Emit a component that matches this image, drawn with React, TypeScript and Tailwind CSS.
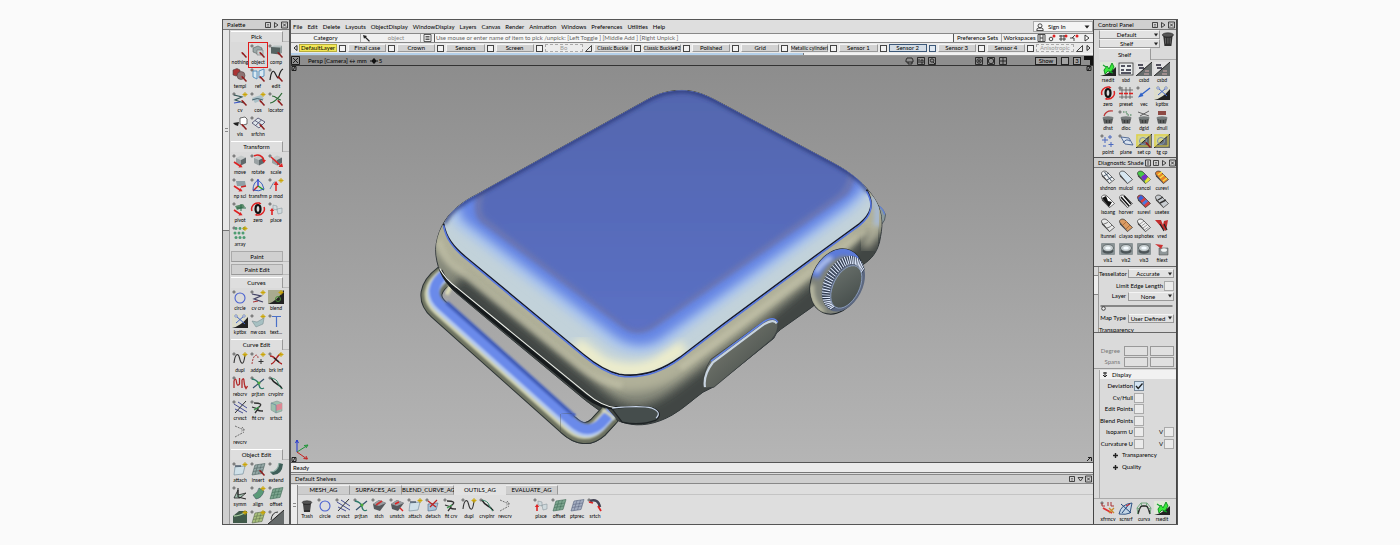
import type { ReactNode } from "react";

/* ---------- icon drawing helpers (16 x 14 grid) ---------- */
const dot = <circle cx="2" cy="2" r="1.1" fill="none" stroke="#333" strokeWidth=".7" />;
const spark = <path d="M13 0v5M10.500 2.500h5M11.500 1l3 3M14.500 1l-3 3" stroke="#c9a400" strokeWidth=".9" />;
const picker = (
  <g>
    <path d="M9 8l3 1.500l-1.500 1z" fill="#c22" />
    <path d="M10 8.500l4.500 5" stroke="#8c1f1f" strokeWidth="1.500" />
  </g>
);
const redArrow = (
  <g>
    <path d="M2 8l6 4" stroke="#d22" strokeWidth="1.600" />
    <path d="M6.500 13.500l4-.2l-2-3.300z" fill="#d22" />
  </g>
);
const cube = (
  <g>
    <path d="M4 4l5-2.500l5 2l-5 2.500z" fill="#c3c8c8" />
    <path d="M4 4l5 2v5.500l-5-2.500z" fill="#9aa2a4" />
    <path d="M9 6l5-2.500v5.500l-5 2.500z" fill="#5f686b" />
  </g>
);
const sheet = (a: string, b: string) => (
  <g>
    <path d="M5 3l10-1.500l-3 10l-10 1.500z" fill={a} stroke={b} strokeWidth=".6" />
    <path d="M8 2.500l-3 10M11.500 2l-3 10M4 6.500l10-1.500M3 9.500l10-1.500" stroke={b} strokeWidth=".5" />
  </g>
);
const half = (
  <g>
    <path d="M0 14L16 0v14z" fill="#666b6b" />
    <path d="M0 14L16 0" stroke="#222" strokeWidth="1" />
  </g>
);
const pot = (
  <g>
    <path d="M3 8h10l-1 5.500h-8z" fill="#3a3d3d" />
    <ellipse cx="8" cy="8" rx="5.500" ry="1.800" fill="#777d7d" />
    <path d="M5 10v3M8 10v3M11 10v3" stroke="#999" strokeWidth=".7" />
  </g>
);
const shade = (fill: string, extra?: ReactNode) => (
  <g>
    <path d="M1.500 4C1 1.500 4.500 0 7 2l7.500 7.500l-5 4z" fill={fill} stroke="#333" strokeWidth=".7" />
    <path d="M1.500 4l8 9.500v.5L2 6.500z" fill="#444" />
    {extra}
  </g>
);
const vis = (
  <g>
    <rect x="1" y="1" width="14" height="12" rx="1" fill="#8b9496" />
    <ellipse cx="8" cy="9" rx="5.500" ry="2.800" fill="#4d5659" />
    <ellipse cx="8" cy="6" rx="5.500" ry="3.500" fill="#c6ced0" stroke="#3c4547" strokeWidth=".6" />
    <ellipse cx="8" cy="6" rx="2.800" ry="1.600" fill="#f4fbff" />
  </g>
);
const zero = (
  <g fill="none">
    <path d="M2 9A6.500 6 0 0 1 9 1M14 5A6.500 6 0 0 1 7 13" stroke="#d22" strokeWidth="1.500" />
    <ellipse cx="8" cy="7" rx="2.500" ry="4" stroke="#111" strokeWidth="2.200" />
    <path d="M9 0l2.500 1.500L9 3zM7 11.500L4.500 13L7 14z" fill="#d22" />
  </g>
);
const kpt = (
  <g>
    <rect width="16" height="14" fill="#dcdccc" />
    <path d="M0 14Q9 12 16 3v11z" fill="#222" />
    <path d="M4 2l9 8M4 9l8-7" stroke="#4466c8" strokeWidth="1" />
    <circle cx="4" cy="2" r="1.200" fill="#fff" stroke="#3450a8" strokeWidth=".6" />
    <circle cx="12" cy="2" r="1.200" fill="#fff" stroke="#3450a8" strokeWidth=".6" />
  </g>
);
const rsedit = (
  <g>
    <rect width="16" height="14" fill="#dfe8d8" />
    <path d="M0 14Q9 12 16 5v9z" fill="#222" />
    <path d="M4 8l3-4l2 3l3-6l2 4l-3 5l-3-1l-3 3z" fill="#3bea3b" stroke="#0a8c1c" strokeWidth=".9" />
    <path d="M3 3l3 2M10 10l3 1" stroke="#12a52a" strokeWidth="1.200" />
  </g>
);
const place = (
  <g>
    <path d="M5 3l4 1v4l-4-1zM9 7l5-1v5l-4 1z" fill="#cfdadd" stroke="#7c8a90" strokeWidth=".5" />
    <path d="M4 13V8" stroke="#d22" strokeWidth="1.600" />
    <path d="M1.800 9L4 6l2.200 3z" fill="#d22" />
  </g>
);

const icons: Record<string, ReactNode> = {
  nothing: picker,
  object: <>{dot}<path d="M3 4l5-2l4 2v5l-4 1l-5-2z" fill="#9ba8a8" stroke="#4a5050" strokeWidth=".5" /><path d="M7 6h6v5h-6z" fill="#c8cfcf" stroke="#666" strokeWidth=".5" />{picker}</>,
  comp: <>{dot}<path d="M3 3l3-1.500h8l-2 2z" fill="#b9c4c4" /><path d="M3 3l9 .5v7l-9-1z" fill="#566362" /><path d="M12 3.500l2-2v7l-2 2z" fill="#8f9b9b" />{picker}</>,
  templ: <><path d="M1 2l4-1.500l3 1.500v5l-4 1l-3-1z" fill="#a33" stroke="#444" strokeWidth=".6" /><circle cx="9" cy="7.500" r="4" fill="#8d7373" stroke="#433" strokeWidth=".5" />{picker}</>,
  ref: <>{dot}<path d="M3 3h4v8l-4-2zM9 3l5-2v7l-5 2z" fill="#d9e9f2" stroke="#4d8bbb" strokeWidth=".9" />{picker}</>,
  edit: <>{dot}<path d="M2 12C3 4 5 1 7 5s3 7 4 3s2-6 4-7" fill="none" stroke="#222" strokeWidth="1.200" />{picker}</>,
  cv: <>{dot}{spark}<path d="M2 3l8 2l-7 3l9 3" fill="none" stroke="#355" strokeWidth="1.100" /><path d="M2 11l6-1" stroke="#3a55c8" strokeWidth="1.200" />{picker}</>,
  cos: <>{dot}{spark}<path d="M2 6l9-3l3 4l-9 4z" fill="#a9bfc6" /><path d="M2 8q5-3 11 0" fill="none" stroke="#46606c" />{picker}</>,
  locator: <>{dot}<path d="M2 11C5 11 11 6 14 1M4 4c4 0 6 4 9 4" fill="none" stroke="#2d6a35" strokeWidth="1.200" />{picker}</>,
  vis: <><path d="M8 2l5-1l2 2v5l-4 1l-3-1z" fill="#fff" stroke="#333" strokeWidth=".7" /><path d="M1 7l6-1l-1 4l-3-1z" fill="#222" />{picker}</>,
  srfchn: <>{dot}<path d="M2 7l6-5l7 4l-6 6z" fill="#dfe6ea" stroke="#446" strokeWidth=".8" /><path d="M5 4.500l7 4.500M5.500 9.500l6-5.500" stroke="#446" strokeWidth=".8" />{picker}</>,
  move: <>{dot}{cube}{redArrow}</>,
  rotate: <>{dot}{cube}<path d="M4 2q7-3 10 4" fill="none" stroke="#d22" strokeWidth="1.500" /><path d="M12 6h4l-2 3z" fill="#d22" /></>,
  scale: <>{dot}{cube}<path d="M3 3l10 9" stroke="#d22" strokeWidth="1.400" /><path d="M10.500 13h4.500l-1-4z" fill="#d22" /></>,
  "np scl": <>{dot}<path d="M4 3h9l1 5h-9z" fill="#8fa0a5" />{redArrow}<path d="M9 9l5-1" stroke="#c22" strokeWidth="1.500" /></>,
  transfrm: <g fill="none" strokeWidth="1.300">{dot}<path d="M8 8V1" stroke="#23d" /><path d="M8 8l-5 5" stroke="#c22" /><path d="M8 8l6 4" stroke="#292" /><path d="M8 2Q3 5 3 12Q9 14 14 11Q13 5 8 2" stroke="#2952b8" strokeWidth=".9" /></g>,
  "p mod": <>{dot}{spark}<path d="M8 13V5" stroke="#d22" strokeWidth="1.500" /><path d="M5.500 7L8 3l2.500 4z" fill="#d22" /><path d="M2 11q4-8 5-7" fill="none" stroke="#6688a8" /></>,
  pivot: <>{dot}<path d="M3 4l8-2l2 3l-8 3z" fill="#5b8a6a" /><path d="M9 2v7M5 6h9" stroke="#264" strokeWidth=".9" />{redArrow}</>,
  zero,
  place: <>{dot}{place}</>,
  array: <>{dot}<g fill="#4e9c72">{[3, 7, 11].map((x) => <g key={x}><circle cx={x + 1} cy="2.500" r="1.400" /><circle cx={x} cy="7" r="1.500" /><circle cx={x + 1} cy="11.500" r="1.500" /></g>)}</g>{spark}</>,
  circle: <>{dot}<circle cx="8" cy="8" r="5" fill="none" stroke="#4a62d0" strokeWidth="1.100" /></>,
  "cv crv": <>{dot}{spark}<path d="M2 4l9 2l-7 3l9 3" fill="none" stroke="#446" strokeWidth="1.200" /><path d="M3 12l5-1" stroke="#a33" /></>,
  blend: <><rect width="16" height="14" fill="#a9ab90" /><path d="M0 14Q9 11 16 0v14z" fill="#222" /><circle cx="10" cy="9" r="2.500" fill="none" stroke="#4a8c3a" />{spark}</>,
  kptbx: kpt,
  "nw cos": <>{dot}{spark}<path d="M2 7l5 1l7-4l-1 6l-7 3z" fill="#a7c0c2" stroke="#6f8589" strokeWidth=".5" /></>,
  "text...": <>{dot}<path d="M4 2.500h9M8.500 2.500V13" stroke="#4a70c8" strokeWidth="1.200" /></>,
  dupl: <>{dot}<path d="M2 11C3 2 6 0 7.500 6s4 9 5.500-3" fill="none" stroke="#333" strokeWidth="1.100" />{spark}</>,
  addpts: <>{dot}<path d="M2 12C3 2 8 1 8 6" fill="none" stroke="#a44" strokeWidth="1" strokeDasharray="2 1" /><path d="M11 7v5M8.500 9.500h5" stroke="#333" />{spark}</>,
  "brk inf": <>{dot}<path d="M2 4c6 0 7 7 12 8M3 12C8 11 8 3 13 2" fill="none" stroke="#a22" strokeWidth="1.300" /><path d="M6 6l5 4" stroke="#222" strokeWidth="1.600" />{spark}</>,
  rebcrv: <>{dot}<path d="M2 12V5q2-4 2.500 1t3 2V2M10 12V4q2-3 2 1t2 7M12.500 10l1.500 2.500l1.500-2.500" fill="none" stroke="#b02a2a" strokeWidth="1.300" /></>,
  prjtan: <>{dot}<path d="M2 3q6 1 7 6t5 3" fill="none" stroke="#2d7a6a" strokeWidth="1.300" /><path d="M3 12l11-9" stroke="#33506a" strokeWidth="1.200" /><circle cx="9" cy="7" r="1.500" fill="#4caa3c" /></>,
  crvplnr: <>{dot}<path d="M3 2q2 4 6 6t5 5" fill="none" stroke="#222" strokeWidth="1.600" /><path d="M3 2q6 1 7 5t4 6" fill="none" stroke="#3a8a6a" strokeWidth="1" /></>,
  crvsct: <>{dot}<path d="M2 4l13 8M3 9l8 4M6 2l9 6" stroke="#333c8a" strokeWidth=".9" /><path d="M3 13L14 1" stroke="#333" strokeWidth="1" /></>,
  "fit crv": <>{dot}<path d="M4 3q10 0 5 4t4 4M2 7l6 2l-3 4" fill="none" stroke="#333" strokeWidth="1.300" /><path d="M4 10l5-3" stroke="#3a9a4a" strokeWidth="1.200" /></>,
  srtsct: <><path d="M3 3l6-2l5 2v8l-6 2l-5-3z" fill="#9cc0ae" stroke="#7c8c8a" strokeWidth=".5" /><path d="M8 5l6-2v6l-6 2z" fill="#dd8894" /><path d="M3 3l5 2v8" fill="none" stroke="#59799a" strokeWidth=".6" /></>,
  revcrv: <path d="M3 2l9 4M3 13l9-5M10 3l2.500 3l-3 1" fill="none" stroke="#555" strokeWidth=".8" strokeDasharray="2 1" />,
  attach: <>{dot}<path d="M3 5l10-1l-2 8l-9 1z" fill="#cfe0e8" stroke="#6c8594" strokeWidth=".6" /><path d="M3 4h6" stroke="#345" strokeWidth="1.200" />{spark}</>,
  insert: <>{dot}{sheet("#95a8a6", "#4b5f5e")}{picker}</>,
  extend: <>{dot}<path d="M2 10q8 0 9-9l4 1q-1 11-10 11z" fill="#3e5f59" /><path d="M2 10q8 0 9-9" fill="none" stroke="#8fb0a6" strokeWidth="1.200" /></>,
  symm: <>{dot}<path d="M2 12l4-8v5l8-2l-6 5z" fill="#a0bfae" stroke="#222" strokeWidth=".8" /><path d="M6 2v9l8 2" fill="none" stroke="#222" /></>,
  align: <>{dot}<path d="M3 9q5-2 6-7l5 3q-2 7-8 8z" fill="#5a9a78" stroke="#345" strokeWidth=".5" />{spark}</>,
  offset: <>{dot}{sheet("#7da58f", "#3f6a55")}</>,
  s1: <><path d="M1 6l6-5h8v12h-14z" fill="#405a4a" /><path d="M2 6q6 0 12-4" stroke="#a9d0a0" fill="none" strokeWidth="1.500" />{spark}</>,
  s2: <>{dot}{sheet("#a9c07c", "#5a6a4a")}{spark}</>,
  s3: <>{dot}{half}<path d="M3 10q1-8 7-8" fill="none" stroke="#333" /></>,
  rsedit,
  sbd: <><rect x="1" y="1" width="14" height="12" fill="#e9ecec" stroke="#333" strokeWidth=".8" /><path d="M3 4h4M9 4h4M3 8h3M8 8h5M3 11h10" stroke="#223" strokeWidth="1.400" /></>,
  csbd: <><rect width="16" height="14" fill="#e2e2e2" />{half}<path d="M2 3h5M3 6h5" stroke="#223" strokeWidth="1.500" /><path d="M9 9h4M8 12h5" stroke="#d8b0b0" strokeWidth="1.200" /></>,
  preset: <>{dot}<path d="M4 1v12M8 1v12M12 1v12M1 4h14M1 11h14" stroke="#555" strokeWidth=".8" /><path d="M1 7.500h14" stroke="#d22" strokeWidth="1.400" strokeDasharray="4 1" /></>,
  vec: <>{dot}<path d="M14 2L5 9" stroke="#2f62c8" strokeWidth="1.300" /><path d="M2 11.500l3-5l2.500 3.500z" fill="#2f62c8" /></>,
  dhst: <>{pot}<path d="M4 6q2-6 9-5" fill="none" stroke="#b33" strokeWidth="1.200" /></>,
  dloc: <>{dot}{pot}<path d="M5 2h4v3h5" fill="none" stroke="#387a4a" strokeDasharray="1.500 1" /></>,
  dgid: <>{pot}<path d="M2 2l11 4M4 6l9-5" stroke="#555" strokeWidth=".9" /></>,
  dnull: <>{pot}<rect x="4" y="1" width="8" height="4" fill="#8e4a44" /></>,
  point: <>{dot}<path d="M5 3v6M2 6h6M10 1v4M8 3h4M11 8v5M8.500 10.500h5M3 12h3" stroke="#4a68c0" strokeWidth="1" /></>,
  plane: <>{dot}<path d="M3 3l8 1l4 7l-8-1z" fill="#d8e2f0" stroke="#45608e" strokeWidth=".9" /><path d="M5 9q3-5 7-2" fill="none" stroke="#45608e" /></>,
  "set cp": <><path d="M0 0h16L0 14z" fill="#d8d78a" />{half}<rect x="1" y="1" width="13" height="11" fill="none" stroke="#e0cf3c" strokeWidth="1" /><circle cx="7" cy="7" r="3.500" fill="none" stroke="#7b92b4" />{picker}</>,
  "tg cp": <><path d="M0 0h16L0 14z" fill="#d8d78a" />{half}<rect x="1" y="1" width="13" height="11" fill="none" stroke="#e0cf3c" strokeWidth="1" /><circle cx="7" cy="7" r="3.500" fill="none" stroke="#7b92b4" /></>,
  shdnon: shade("#eef1f3", <path d="M4 6l5-3M7 10l5-3M4.500 2l7 9" stroke="#345" strokeWidth=".9" />),
  mulcol: shade("#d6e6f0"),
  rancol: shade("#49c94a", <><path d="M5 7l4-3l3 3l-4 4z" fill="#7a2cc8" /><path d="M9 11l3-4l2.500 2.500l-5 4z" fill="#e8e23a" /></>),
  curevl: shade("#e8872a", <path d="M4 5l4-3M6 8l4-3M9 11l4-3" stroke="#f3e04a" strokeWidth="1.500" />),
  isoang: shade("#fff", <path d="M2 4l4-2l2 5l4 1l-3 5z" fill="#111" />),
  horver: shade("#fff", <path d="M3 3l8 9M6 2l7 8" stroke="#111" strokeWidth="1.600" />),
  surevl: shade("#d84040", <><path d="M2 4l3-3l3 3l-4 3z" fill="#3a62d8" /><path d="M6 9l4-3.500l2 2l-4 3.500z" fill="#4a7ae0" /></>),
  usetex: shade("#c8ccd0", <path d="M4 6l5-3M6 9l6-3" stroke="#333" strokeWidth="1.400" />),
  ltunnel: shade("#e8e8e8", <path d="M4 6q4-1 5-3M7 10q4-1 5-3" fill="none" stroke="#777" />),
  clayao: shade("#d99a62", <path d="M5 7l4-4M8 11l4-4" stroke="#b06f3c" />),
  ssphotex: shade("#f0f0f0", <path d="M4 6l4-3M5.500 8l4-3M7 10l4-3M8.500 12l4-3" stroke="#777" strokeWidth=".7" />),
  vred: <><path d="M1 2h6l2 5l1-4l4-1l-2 11l-3-2z" fill="#c22c2c" /><path d="M6 6l4 7M10 6l3 6" stroke="#222" strokeWidth="1.200" /></>,
  vis1: vis,
  vis2: vis,
  vis3: vis,
  filext: <><path d="M5 6h9v7h-9z" fill="#8e9698" stroke="#444" strokeWidth=".5" /><ellipse cx="10" cy="8" rx="3" ry="1.800" fill="#f0f4f4" /><path d="M1 2l8 1l-2 4l-2-2z" fill="#c33" /></>,
  Trash: <><path d="M4 5h8l-1 9H5z" fill="#2f2f2f" /><ellipse cx="8" cy="4.500" rx="4.800" ry="1.800" fill="#555" stroke="#1d1d1d" strokeWidth=".5" /><path d="M6 7v5M8 7v5M10 7v5" stroke="#7d7d7d" strokeWidth=".6" /></>,
  stch: <>{dot}<path d="M2 6l6-4l7 3l-6 8l-6-2z" fill="#54585c" /><path d="M2 6l6-4l7 3l-7 3z" fill="#9a9ea2" /><path d="M5 7l6-4" stroke="#c33" strokeWidth="1.600" /></>,
  unstch: <>{dot}<path d="M2 6l6-4l7 3l-6 8l-6-2z" fill="#54585c" /><path d="M2 6l6-4l7 3l-7 3z" fill="#9a9ea2" /><path d="M6 6l4-2M11 10l3 3" stroke="#d22" strokeWidth="1.400" /></>,
  detach: <>{dot}<path d="M3 6l10-1l-2 7l-8 1z" fill="#a9c4da" stroke="#4a6484" strokeWidth=".6" /><path d="M3 3l8 6M12 2L5 9" stroke="#b22" strokeWidth="1.200" /></>,
  ptprec: sheet("#a3adc0", "#56617c"),
  srtch: <>{dot}<path d="M3 3q8-3 10 6" fill="none" stroke="#445" strokeWidth="2.500" /><path d="M2 4l4 1M11 8l3 5" stroke="#d22" strokeWidth="1.800" /></>,
  xfrmcv: <>{dot}<path d="M2 2v3h3M8 1v4M11 1v4h3" stroke="#a33" fill="none" /><path d="M3 7l9 5" stroke="#d33" strokeWidth="1.800" /><path d="M9 7l5 5M14 7l-5 5" stroke="#c88a2a" strokeWidth="1.300" /></>,
  scnsrf: <><path d="M1 13Q3 3 14 2l-2 10q-4 2-11 1z" fill="#c4d6e6" stroke="#23477c" strokeWidth=".9" /><path d="M3 3l10 9M12 2L4 12" stroke="#23477c" /><path d="M8 5l4-2" stroke="#d22" /></>,
  curva: <><path d="M2 13Q4 5 6 5h4q2 0 4 8" fill="none" stroke="#222" strokeWidth="1.400" /><path d="M2 13L1 7l4-5h6l4 5l-1 6M6 5L5 2M10 5l1-3M4 8L1 7M12 8l3-1" fill="none" stroke="#5a9a6a" strokeWidth=".8" /></>,
};

function Tool({ name, selected = false }: { name: string; selected?: boolean }) {
  const hidden = /^s\d$/.test(name);
  return (
    <button
      type="button"
      className={
        selected
          ? "flex h-6 w-[18px] flex-col items-center overflow-visible outline outline-[#e01b1b]"
          : "flex h-6 w-[18px] flex-col items-center overflow-visible"
      }
    >
      <svg viewBox="0 0 16 14" className="mt-px h-[14px] w-4 shrink-0" aria-hidden="true">
        {icons[name]}
      </svg>
      {!hidden && <span className="mt-px text-[5px] leading-[7px] whitespace-nowrap">{name}</span>}
    </button>
  );
}

function Tools({ names }: { names: string[] }) {
  return (
    <div className="mt-px flex flex-wrap">
      {names.map((n, i) => (
        <Tool key={n + i} name={n} selected={n === "object"} />
      ))}
    </div>
  );
}

function WinButtons({ extra = false }: { extra?: boolean }) {
  return (
    <svg viewBox={extra ? "0 0 33 8" : "8 0 25 8"} className={extra ? "h-2 w-[33px] shrink-0" : "h-2 w-[25px] shrink-0"} fill="none" stroke="#222" strokeWidth=".8" aria-hidden="true">
      {extra && <path d="M1.500 1h5v6h-5zM4 2v4" />}
      <path d="M9.500 1.500h5v5h-5z" />
      <path d="M11 3.500h2M11 5h2" strokeWidth=".5" />
      <path d="M18.500 1.500l3.500 2.500l-3.500 2.500z" />
      <path d="M25.500 1h6v6h-6zM27 2.500l3 3M30 2.500l-3 3" />
    </svg>
  );
}

function PanelHead({ title, extra }: { title: string; extra?: boolean }) {
  return (
    <header className="flex h-[10px] shrink-0 items-center justify-between border-b border-[#777] bg-[#d0d0d0] pl-1">
      <h2 className="whitespace-nowrap">{title}</h2>
      <WinButtons extra={extra} />
    </header>
  );
}

const sections: { title: string; tools?: string[] }[] = [
  { title: "Pick", tools: ["nothing", "object", "comp", "templ", "ref", "edit", "cv", "cos", "locator", "vis", "srfchn"] },
  { title: "Transform", tools: ["move", "rotate", "scale", "np scl", "transfrm", "p mod", "pivot", "zero", "place", "array"] },
  { title: "Paint" },
  { title: "Paint Edit" },
  { title: "Curves", tools: ["circle", "cv crv", "blend", "kptbx", "nw cos", "text..."] },
  { title: "Curve Edit", tools: ["dupl", "addpts", "brk inf", "rebcrv", "prjtan", "crvplnr", "crvsct", "fit crv", "srtsct", "revcrv"] },
  { title: "Object Edit", tools: ["attach", "insert", "extend", "symm", "align", "offset", "s1", "s2", "s3"] },
];

function Palette() {
  return (
    <aside className="flex w-[68px] shrink-0 flex-col overflow-hidden border-r-2 border-[#555] bg-[#dadada]">
      <PanelHead title="Palette" />
      <div className="flex min-h-0 flex-1">
        <div className="flex w-[7px] shrink-0 flex-col border-r border-[#999] bg-[#cfcfcf]">
          <div className="flex h-[201px] items-center justify-center border-b border-[#777] bg-[#e6e6e6]">
            <span className="h-1 w-[3px] border-y border-[#888]" />
          </div>
        </div>
        <div className="flex min-w-0 flex-1 flex-col gap-0.5 overflow-hidden pt-px pl-px">
          {sections.map((s) => (
            <section key={s.title} className="shrink-0">
              <div className="flex h-[11px] items-stretch">
                <h3
                  className={
                    s.tools
                      ? "flex w-[52px] items-center justify-center border-t border-r border-t-white border-r-[#999] bg-[#dedede]"
                      : "flex w-[52px] items-center justify-center border border-[#aaa] border-b-[#999] bg-[#d0d0d0]"
                  }
                >
                  {s.title}
                </h3>
                <span className="flex-1 border-b border-[#bbb]" />
              </div>
              {s.tools && <Tools names={s.tools} />}
            </section>
          ))}
        </div>
      </div>
    </aside>
  );
}

const menus = ["File", "Edit", "Delete", "Layouts", "ObjectDisplay", "WindowDisplay", "Layers", "Canvas", "Render", "Animation", "Windows", "Preferences", "Utilities", "Help"];

const layers = [
  "DefaultLayer", "Final case", "Crown", "Sensors", "Screen", "Bo", "Classic Buckle", "Classic Buckle#2",
  "Polished", "Grid", "Metallic cylinderi", "Sensor 1", "Sensor 2", "Sensor 3", "Sensor 4", "Anisotropic",
];

function layerClass(name: string) {
  const size = name.length > 13 ? "text-[5px] " : "";
  const base = size + "flex h-2 min-w-0 flex-1 items-center justify-center border whitespace-nowrap ";
  if (name === "DefaultLayer") return base + "border-[#b8ae3c] bg-[#f3e858]";
  if (name === "Sensor 2") return base + "border-[#3c5878] bg-[#d4dde6]";
  if (name === "Bo" || name === "Anisotropic") return base + "border-dashed border-[#aaa] bg-[#ececec] text-[#999]";
  return base + "border-[#f4f4f4] border-r-[#999] border-b-[#999] bg-[#d2d2d2]";
}

function TopBars() {
  return (
    <div className="shrink-0">
      <nav className="flex h-[13px] items-center gap-[5px] bg-[#dedede] pl-0.5">
        {menus.map((m) => (
          <button key={m} type="button">{m}</button>
        ))}
        <button type="button" className="ml-auto flex h-[11px] w-[60px] items-center gap-1 border border-[#aaa] bg-[#f4f4f4] px-0.5">
          <svg viewBox="0 0 8 8" className="size-2" fill="none" stroke="#222" strokeWidth=".8" aria-hidden="true">
            <circle cx="4" cy="2.800" r="2" />
            <path d="M.7 7.500q0-2.500 2-2.500h2.600q2 0 2 2.500z" />
          </svg>
          <span className="flex-1 text-left">Sign In</span>
          <svg viewBox="0 0 6 4" className="h-1 w-[6px]" aria-hidden="true"><path d="M.5.5h5L3 3.500z" fill="#222" /></svg>
        </button>
      </nav>
      <div className="flex h-[10px] items-stretch border-y border-[#888] bg-[#f0f0f0] leading-[8px]">
        <button type="button" className="w-[70px] border-r border-[#aaa]">Category</button>
        <svg viewBox="0 0 11 8" className="h-2 w-[11px]" aria-hidden="true"><path d="M2 1l4 1l-1 1l4 4l-1 .8l-4-4l-1 1z" fill="#222" /></svg>
        <span className="w-[49px] border-r border-[#aaa] text-center text-[#888]">object</span>
        <svg viewBox="0 0 13 8" className="h-2 w-[13px]" fill="none" stroke="#333" strokeWidth=".8" aria-hidden="true"><path d="M3 .5h7v7H3zM4.500 2.500h4M4.500 4h4M4.500 5.500h4" /></svg>
        <input
          aria-label="Prompt line"
          placeholder="Use mouse or enter name of item to pick /unpick: [Left Toggle ] [Middle Add ] [Right Unpick ]"
          className="min-w-0 flex-1 border-x border-[#555] bg-[#f7f7f7] pl-px leading-[8px] placeholder:text-[#666]"
        />
        <button type="button" className="w-12 border-r border-[#aaa]">Preference Sets</button>
        <button type="button" className="w-[35px]">Workspaces</button>
        <svg viewBox="0 0 44 8" className="h-2 w-11" fill="none" stroke="#333" strokeWidth=".9" aria-hidden="true">
          <path d="M1 .5h7v7H1zM3 1v6M6 1v6M3 4h3" />
          <circle cx="14" cy="5" r="1.800" /><circle cx="17" cy="2" r="1.500" fill="#d22" stroke="none" />
          <path d="M22 2h7M22 5h7M24 1v6M27 1v6" /><circle cx="29" cy="2" r="1.500" fill="#d22" stroke="none" />
          <path d="M33 4h4v3M35 4l3-3" /><circle cx="40" cy="2" r="1.500" fill="#d22" stroke="none" />
        </svg>
        <svg viewBox="0 0 12 8" className="h-2 w-3" fill="#fff" stroke="#222" strokeWidth=".9" aria-hidden="true"><path d="M4 1l4 3l-4 3z" /></svg>
      </div>
      <div className="flex h-[10px] items-center bg-[#e9e9e9]">
        <button type="button" aria-label="Previous layers" className="w-2">
          <svg viewBox="0 0 8 8" className="size-2" fill="#fff" stroke="#222"><path d="M6 1.500L3 4l3 2.500z" /></svg>
        </button>
        {layers.map((l) => (
          <div key={l} className="flex min-w-0 flex-1 items-center gap-0.5 pr-0.5">
            <button type="button" className={layerClass(l)}>{l}</button>
            {l === "Bo" || l === "Anisotropic" ? (
              <svg viewBox="0 0 7 7" className="size-[7px] shrink-0" fill="none" stroke="#333" strokeWidth=".9" aria-hidden="true"><path d="M.5 6.500l6-6v6z" /></svg>
            ) : (
              <input
                type="checkbox"
                aria-label={l + " visible"}
                className={l === "Sensor 2" ? "size-[7px] shrink-0 appearance-none border border-[#3c5878] bg-[#dfe8f2]" : "size-[7px] shrink-0 appearance-none border border-[#444] bg-[#f2f2f2]"}
              />
            )}
          </div>
        ))}
        <button type="button" aria-label="Next layers" className="w-2">
          <svg viewBox="0 0 8 8" className="size-2" fill="#fff" stroke="#222"><path d="M2 1.500L5 4l-3 2.500z" /></svg>
        </button>
      </div>
      <div className="h-[3px] border-b border-[#999] bg-[#f2f2f2]">
        <div className="h-0.5 w-[64%] border-r border-[#777] bg-[#b4d0ea]" />
      </div>
    </div>
  );
}

function CameraBar() {
  return (
    <div className="flex h-[10px] shrink-0 items-center border-b border-[#333] bg-[#8e8e8e]">
      <svg viewBox="0 0 9 9" className="size-[9px]" fill="none" stroke="#111" strokeWidth=".9" aria-hidden="true"><path d="M.5.5h8v8h-8zM2 2l5 5M7 2L2 7" /></svg>
      <span className="ml-2">Persp [Camera] ↔ mm</span>
      <svg viewBox="0 0 10 8" className="ml-0.5 h-2 w-[10px]" fill="#111" stroke="#111" aria-hidden="true"><path d="M1 4h8M5 1v6" /><circle cx="5" cy="4" r="1.700" /></svg>
      <span>5</span>
      <svg viewBox="0 0 32 8" className="mr-[38px] ml-auto h-2 w-8" fill="none" stroke="#111" strokeWidth=".8" aria-hidden="true">
        <path d="M2 1h5l1 2v2H1V3zM3 5v2h4V5" />
        <path d="M12.500.5h7v7h-7zM14 2v4M16 3h2v3h-2z" />
        <path d="M23.500.5h7v7h-7zM28 5l2 2" /><circle cx="27" cy="3.500" r="1.700" />
      </svg>
      <svg viewBox="0 0 32 8" className="mr-7 h-2 w-8" fill="none" stroke="#111" strokeWidth=".8" aria-hidden="true">
        <path d="M.5.5h7v7h-7zM3 4h2M4 3v2" /><circle cx="4" cy="4" r="2.200" />
        <path d="M12.500.5h7v7h-7z" /><circle cx="16" cy="4" r="2.700" />
        <path d="M24.500.5h7v7h-7zM25 4h6M28 1v6" />
      </svg>
      <button type="button" className="flex h-2 w-[22px] items-center justify-center border border-[#222] bg-[#a2a2a2]">Show</button>
      <span className="ml-1 size-2 border border-[#222] bg-[#a2a2a2]" />
      <button type="button" className="ml-1 flex size-2 items-center justify-center border border-[#222] bg-[#a2a2a2]">3</button>
      <svg viewBox="0 0 10 9" className="ml-0.5 h-[9px] w-[10px]" aria-hidden="true"><path d="M1 0h9v9H7V4H1z" fill="#111" /></svg>
    </div>
  );
}

const BODY =
  "M682 89.500C694 89.500 703 93 715 99L833 162C852 172 866 184 875 198C882 209 884 222 881 236C879 251 872 259 862 265L812 307L781 329Q776 332 774 338L713 387L703 392C692 400 684 408 672 415C656 424 640 427 625 423C610 419 597 409 585 400L510 338L455 292C441 280 435 264 435 249C436 232 444 217 456 207C462 202 468 198 476 194L645 100C657 93 668 89.500 682 89.500Z";
const FACE =
  "M682 89.500C694 89.500 703 93 715 99L833 162C852 172 864 182 869 191C875 203 872 213 860 223L823 250L723 324L680 357C658 373 638 377 619 374C605 371 594 363 583 354L467 258C452 246 445 236 443 223C447 215 451 211 456 207C462 202 468 198 476 194L645 100C657 93 668 89.500 682 89.500Z";
const SEAM = "M443 223C445 236 452 246 467 258L583 354C594 363 605 371 619 374C638 377 658 373 680 357L723 324L823 250L860 223C872 213 875 203 867 189";
const LOOP = "M444 275C428 287 427 299 438 309L568 425Q584 440 598 427L610 414";

const bandLoop = (
  <g fill="none" strokeLinecap="butt" strokeLinejoin="round">
    <path d={LOOP} stroke="#2e3536" strokeWidth="22" />
    <path d={LOOP} stroke="#6b705f" strokeWidth="20" />
    <g filter="url(#b1)">
      <path d={LOOP} stroke="#cfd1b0" strokeWidth="14" transform="translate(0 -1)" />
      <path d={LOOP} stroke="#b4caf0" strokeWidth="12" transform="translate(2 -2)" />
      <path d={LOOP} stroke="#6a8aea" strokeWidth="10" transform="translate(3 -4)" />
      <path d="M446 302L574 416" stroke="#4560bc" strokeWidth="4" />
    </g>
    <path d="M446 276Q454 281 446 294" stroke="#dcdcb8" strokeWidth="4" filter="url(#b1)" />
    <path d="M602 410q7 3 12 9" stroke="#d6d7bc" strokeWidth="3" filter="url(#b1)" />
  </g>
);

function Viewport() {
  const teeth = Array.from({ length: 34 }, (_, i) => {
    const a = (90 + i * 6.600) * (Math.PI / 180);
    const c = Math.cos(a);
    const s = Math.sin(a);
    return <path key={i} d={`M${13 * c + 2} ${23 * s}L${19 * c - 1} ${29 * s - 1}`} />;
  });
  return (
    <main className="min-h-0 flex-1 bg-linear-to-b from-[#8d8d8d] to-[#b5b5b5]">
      <svg viewBox="291 65 802 397" className="h-full w-full" role="img" aria-label="Shaded watch case model">
        <defs>
          <clipPath id="body"><path d={BODY} /></clipPath>
          <clipPath id="face"><path d={FACE} /></clipPath>
          <clipPath id="loopEnd"><path d="M560 414L592 412Q600 404 606 407L618 421L600 450H560Z" /></clipPath>
          <clipPath id="crown"><ellipse cx="837" cy="281" rx="25" ry="34" transform="rotate(24 837 281)" /></clipPath>
          <filter id="b1" x="-20%" y="-20%" width="140%" height="140%"><feGaussianBlur stdDeviation="1.2" /></filter>
          <filter id="b2" x="-20%" y="-20%" width="140%" height="140%"><feGaussianBlur stdDeviation="2" /></filter>
          <filter id="b5" x="-20%" y="-20%" width="140%" height="140%"><feGaussianBlur stdDeviation="5" /></filter>
          <linearGradient id="core" x1="0" y1="0" x2="0" y2="1"><stop offset="0" stopColor="#5265ac" /><stop offset="1" stopColor="#5b70c4" /></linearGradient>
          <linearGradient id="disc" x1="0" y1="0" x2="1" y2="1"><stop offset="0" stopColor="#6a716c" /><stop offset="1" stopColor="#434b49" /></linearGradient>
          <linearGradient id="btn" x1="0" y1="0" x2="1" y2="1"><stop offset="0" stopColor="#85877b" /><stop offset="1" stopColor="#3a4241" /></linearGradient>
        </defs>

        <path d="M878 204q6 4 8 10q0 6-4 10z" fill="#8b9a9c" stroke="#39424c" strokeWidth=".7" />
        <path d="M880 206q4 3 5 8" fill="none" stroke="#6684d0" strokeWidth="1.500" />

        {bandLoop}

        <path d={BODY} fill="#85887a" stroke="#2e3438" strokeWidth="1" />
        <g clipPath="url(#body)" fill="none">
          <path d={SEAM} stroke="#b0b099" strokeWidth="34" filter="url(#b5)" />
          <path d="M450 290L585 400C600 412 610 423 635 425C660 425 680 410 703 392L774 338L862 265Q878 252 882 236" stroke="#343b3a" strokeWidth="38" filter="url(#b5)" opacity=".85" />
          <path d="M438 240Q444 262 460 270L580 366Q600 382 622 385" stroke="#c6c5ac" strokeWidth="7" filter="url(#b2)" opacity=".55" />
          <path d="M680 368L715 343L800 280L866 230" stroke="#c6c5ac" strokeWidth="7" filter="url(#b2)" opacity=".6" />
          <path d="M873 195Q881 208 877 226" stroke="#a7bad2" strokeWidth="7" filter="url(#b2)" />
          <path d="M864 246Q874 238 876 226" stroke="#bfbea6" strokeWidth="9" filter="url(#b5)" />
          <path d="M440 270Q445 281 455 289L585 396Q602 409 620 408" stroke="#161a1c" strokeWidth="3.500" />
          <path d="M439 268Q445 279 456 287L586 393Q602 407 618 408" stroke="#eef0ea" strokeWidth="1.100" />
        </g>

        <path d="M612 409Q640 404 653 408Q664 413 656 420Q640 426 622 422Z" fill="#454d4c" stroke="#1f2426" strokeWidth="1.200" />
        <path d="M612 408Q640 405 652 408Q662 412 656 418" fill="none" stroke="#cbd8ec" strokeWidth="1.100" />
        <g clipPath="url(#loopEnd)">{bandLoop}</g>

        <g clipPath="url(#face)">
          <path d={FACE} fill="#c2d2da" />
          <path d="M575 343L602 364Q630 376 656 365L684 346" fill="none" stroke="#efeecb" strokeWidth="15" filter="url(#b5)" />
          <path d="M682 60L850 145Q878 172 866 196L854 209L668 343Q636 363 607 342L459 228Q440 214 450 180L640 70Z" fill="#a9c4ee" filter="url(#b5)" />
          <path d="M682 60L850 142Q874 170 860 192L846 205L658 340Q636 351 615 336L466 222Q452 210 462 176L640 70Z" fill="#6686e4" filter="url(#b5)" />
          <path d="M682 60L850 140Q864 174 848 194L654 328Q636 339 620 326L480 222Q468 210 480 180L645 70Z" fill="#6a70a4" filter="url(#b2)" opacity=".75" />
          <path d="M682 60L845 142Q856 174 840 192L652 324Q636 335 621 322L486 218Q476 210 488 180L645 70Z" fill="url(#core)" filter="url(#b2)" />
          <path d="M443 223C447 215 451 211 456 207C462 202 468 198 476 194L645 100C657 93 668 89.500 682 89.500C694 89.500 703 93 715 99L833 162C852 172 864 182 869 191" fill="none" stroke="#2a3878" strokeWidth="4" filter="url(#b2)" />
        </g>
        <path d={SEAM} fill="none" stroke="#15192a" strokeWidth="1.600" />
        <path d={SEAM} fill="none" stroke="#5878e0" strokeWidth="1.600" transform="translate(0 1.700)" />

        <path d="M705 388Q701 374 711 359L764 321Q775 315 778 323Q779 331 772 339L714 387Z" fill="url(#btn)" stroke="#383f40" strokeWidth=".8" />
        <path d="M705 387Q703 375 713 362L764 324Q774 318 777 323" fill="none" stroke="#c8d4e0" strokeWidth="2.200" />
        <path d="M711 361L763 322Q774 315 778 322" fill="none" stroke="#5f80e4" strokeWidth="1.500" />

        <g>
          <ellipse cx="837" cy="281" rx="25" ry="34" transform="rotate(24 837 281)" fill="#7f837a" stroke="#20262a" strokeWidth="1" />
          <g clipPath="url(#crown)">
            <path d="M814 276Q826 250 846 250Q860 252 864 266" fill="none" stroke="#5c7ada" strokeWidth="11" filter="url(#b2)" />
            <path d="M816 272Q824 260 832 257" fill="none" stroke="#c4d2ee" strokeWidth="4" filter="url(#b2)" />
            <path d="M812 284Q810 302 824 312" fill="none" stroke="#c0c0a6" strokeWidth="5" filter="url(#b2)" />
          </g>
          <g transform="translate(844 284) rotate(27)">
            <ellipse rx="19" ry="29" fill="#5c6880" />
            <g stroke="#1f2a3c" strokeWidth="2.400">{teeth}</g>
            <g stroke="#dce6fa" strokeWidth="1.200">{teeth}</g>
            <ellipse cx="3.500" cy="1" rx="13" ry="23" fill="url(#disc)" stroke="#8fa2c4" strokeWidth=".8" />
          </g>
        </g>

        <g strokeWidth="1" fill="none">
          <path d="M296 452V440M294.500 443l1.500-3l1.500 3" stroke="#2233d0" />
          <path d="M296 452l11-7M303 445.500l4-.5l-2 3" stroke="#22963a" />
          <path d="M296 452l10 7M302.500 458.500l4 .5l-1.500-3" stroke="#c41f1f" />
        </g>
        <g fill="none" stroke="#111" strokeWidth=".9">
          <path d="M291 65.500h4v4h-4zM1088 65.500h4v4h-4zM291 457.500h4v4h-4z" />
          <path d="M1088 461l4-4M1089 457.500h3.500v3.500M292 69l2-3M1089 69l2-3M292 461l2-3" />
        </g>
      </svg>
    </main>
  );
}

const shelfTabs = ["MESH_AG", "SURFACES_AG", "BLEND_CURVE_AG", "OUTILS_AG", "EVALUATE_AG"];
const shelfTools = ["Trash", "circle", "crvsct", "prjtan", "stch", "unstch", "attach", "detach", "fit crv", "dupl", "crvplnr", "revcrv"];

function Shelves() {
  return (
    <div className="shrink-0 border-t border-[#555] bg-[#dedede]">
      <p className="h-[10px] border-b border-[#777] bg-[#ebebeb] pl-0.5 leading-[10px]">Ready</p>
      <div className="mt-px flex h-[10px] items-center justify-between border-y border-[#888] bg-[#cfcfcf] pl-1">
        <h2>Default Shelves</h2>
        <svg viewBox="8 0 25 8" className="h-2 w-[25px]" fill="none" stroke="#222" strokeWidth=".8" aria-hidden="true">
          <path d="M9.500 1.500h5v5h-5z" />
          <path d="M11 3.500h2M11 5h2" strokeWidth=".5" />
          <path d="M18 2.500h5l-2.500 3.500z" />
          <path d="M25.500 1h6v6h-6zM27 2.500l3 3M30 2.500l-3 3" />
        </svg>
      </div>
      <div className="mt-px flex h-[39px]">
        <div className="flex w-[7px] items-center justify-center border-r border-[#888] bg-[#ececec]">
          <span className="h-1 w-[3px] border-y border-[#888]" />
        </div>
        <div className="min-w-0 flex-1">
          <div className="flex h-[10px]">
            {shelfTabs.map((t) => (
              <button
                key={t}
                type="button"
                className={
                  t === "OUTILS_AG"
                    ? "w-[52px] bg-[#e2e2e2] leading-[8px]"
                    : "w-[52px] border-t border-r border-b border-t-[#eee] border-r-[#999] border-b-[#bbb] bg-[#cdcdcd] leading-[8px]"
                }
              >
                {t}
              </button>
            ))}
            <span className="flex-1 border-b border-[#c4c4c4]" />
          </div>
          <div className="flex pt-0.5">
            {shelfTools.map((t) => <Tool key={t} name={t} />)}
            <span className="w-[18px]" />
            {["place", "offset", "ptprec", "srtch"].map((t) => <Tool key={t} name={t} />)}
          </div>
        </div>
      </div>
    </div>
  );
}

function Drop({ label, value, wide = false }: { label: string; value: string; wide?: boolean }) {
  return (
    <div className={wide ? "grid flex-1 items-center" : "grid w-[46px] items-center"}>
      <select
        aria-label={label}
        className="col-start-1 row-start-1 h-[9px] w-full appearance-none border border-[#999] border-t-[#f4f4f4] bg-[#e2e2e2] pr-1.5 text-center [text-align-last:center] leading-[7px]"
      >
        <option>{value}</option>
      </select>
      <svg viewBox="0 0 4 4" className="pointer-events-none col-start-1 row-start-1 mr-0.5 size-1 justify-self-end" aria-hidden="true"><path d="M0 .5h4L2 3.500z" fill="#222" /></svg>
    </div>
  );
}

function Check({ label, checked = false }: { label: string; checked?: boolean }) {
  return (
    <label className="flex items-center gap-px">
      <span className="whitespace-nowrap">{label}</span>
      <span className="grid">
        <input type="checkbox" defaultChecked={checked} className="col-start-1 row-start-1 size-[10px] appearance-none border border-[#aaa] bg-[#ebebeb] checked:border-[#789] checked:bg-[#d3e4f4]" />
        {checked && (
          <svg viewBox="0 0 10 10" className="pointer-events-none col-start-1 row-start-1 size-[10px]" fill="none" stroke="#222" strokeWidth="1.300" aria-hidden="true"><path d="M2 5l2.200 2.500L8.500 2.500" /></svg>
        )}
      </span>
    </label>
  );
}

function ControlPanel() {
  return (
    <aside className="flex w-[84px] shrink-0 flex-col overflow-hidden border-x border-[#444] bg-[#dadada]">
      <PanelHead title="Control Panel" />
      <div className="flex h-[18px] shrink-0 pl-[5px]">
        <div className="flex w-[62px] flex-col">
          <Drop label="Menu set" value="Default" wide />
          <Drop label="Panel" value="Shelf" wide />
        </div>
        <svg viewBox="3 2 10 12" className="mx-px mt-0.5 h-[14px] w-[14px]" aria-hidden="true">{icons.Trash}</svg>
      </div>
      <div className="shrink-0 pl-[5px]">
        <div className="flex h-3">
          <h3 className="flex w-[52px] items-center justify-center border-t border-r border-t-white border-r-[#999] bg-[#dedede]">Shelf</h3>
          <span className="flex-1 border-b border-[#aaa]" />
        </div>
        <Tools names={["rsedit", "sbd", "csbd", "csbd", "zero", "preset", "vec", "kptbx", "dhst", "dloc", "dgid", "dnull", "point", "plane", "set cp", "tg cp"]} />
      </div>
      <div className="shrink-0 border-t border-[#555]">
        <PanelHead title="Diagnostic Shade" extra />
      </div>
      <div className="shrink-0 pl-[5px]">
        <Tools names={["shdnon", "mulcol", "rancol", "curevl", "isoang", "horver", "surevl", "usetex", "ltunnel", "clayao", "ssphotex", "vred", "vis1", "vis2", "vis3", "filext"]} />
      </div>
      <div className="mt-px flex h-[67px] shrink-0 overflow-hidden border-t border-b border-[#666]">
        <div className="w-[5px] shrink-0 border-r border-[#999]">
          <div className="mt-2 h-5 border-y border-[#888] bg-[#eee]" />
        </div>
        <div className="flex min-w-0 flex-1 flex-col pt-px pr-0.5">
          <div className="flex h-[11px] shrink-0 items-center justify-between"><span>Tessellator</span><Drop label="Tessellator" value="Accurate" /></div>
          <div className="mt-px flex h-[11px] shrink-0 items-center justify-end"><Check label="Limit Edge Length" /></div>
          <div className="flex h-[10px] shrink-0 items-center justify-end gap-0.5"><span>Layer</span><Drop label="Layer" value="None" /></div>
          <svg viewBox="0 0 74 8" className="mt-1 h-2 w-full shrink-0" aria-hidden="true"><path d="M1 1h72" stroke="#333" /><circle cx="4" cy="3.500" r="1.800" fill="#eee" stroke="#222" strokeWidth=".8" /></svg>
          <div className="flex h-[10px] shrink-0 items-center justify-end gap-0.5"><span>Map Type</span><Drop label="Map Type" value="User Defined" /></div>
          <p className="mt-1 shrink-0 leading-[6px]">Transparency</p>
        </div>
      </div>
      <div className="flex h-9 shrink-0 flex-col items-end gap-px border-b border-[#999] pt-[13px] pr-0.5">
        {["Degree", "Spans"].map((t) => (
          <div key={t} className="flex items-center gap-0.5 text-[#777]">
            <label htmlFor={t + "-u"} className="pr-0.5">{t}</label>
            <input id={t + "-u"} className="h-[10px] w-6 border border-[#999] bg-[#e0e0e0]" />
            <input aria-label={t + " V"} className="h-[10px] w-6 border border-[#999] bg-[#e0e0e0]" />
          </div>
        ))}
      </div>
      <div className="mt-px ml-[5px] flex min-h-0 flex-1 flex-col border-l border-[#aaa]">
        <h3 className="flex h-[9px] shrink-0 items-center gap-1 bg-[#f1f1f1] pl-0.5">
          <svg viewBox="0 0 6 6" className="size-1.5" fill="none" stroke="#222" aria-hidden="true"><path d="M3 0v5M1 3l2 2l2-2M1 1h4" /></svg>
          Display
        </h3>
        <div className="mt-px flex flex-col">
          {["Deviation", "Cv/Hull", "Edit Points", "Blend Points", "Isoparm U", "Curvature U"].map((t, i) => (
            <div key={t} className="flex h-[11px] items-center pr-0.5 not-first:mt-px nth-5:mt-0 nth-3:mt-0">
              <div className="flex w-11 justify-end"><Check label={t} checked={i === 0} /></div>
              {i > 3 && <div className="flex flex-1 justify-end"><Check label="V" /></div>}
            </div>
          ))}
        </div>
        {["Transparency", "Quality"].map((t) => (
          <button key={t} type="button" className="flex h-3 shrink-0 items-center gap-1 pl-[13px]">
            <svg viewBox="0 0 5 5" className="size-[5px]" stroke="#222" strokeWidth="1.400" aria-hidden="true"><path d="M0 2.500h5M2.500 0v5" /></svg>
            {t}
          </button>
        ))}
      </div>
      <div className="shrink-0 border-t border-[#aaa] pl-[5px]">
        <Tools names={["xfrmcv", "scnsrf", "curva", "rsedit"]} />
      </div>
    </aside>
  );
}

export default function App() {
  return (
    <div className="min-h-screen bg-[#fafafa] pt-[19px] pb-5">
      <div className="mx-auto flex h-[calc(100vh-39px)] w-full max-w-[956px] overflow-hidden border border-[#555] bg-[#dadada] font-['Lato','DejaVu_Sans',sans-serif] text-[6px] leading-[8px] text-black">
        <Palette />
        <div className="flex min-w-0 flex-1 flex-col">
          <TopBars />
          <CameraBar />
          <Viewport />
          <Shelves />
        </div>
        <ControlPanel />
      </div>
    </div>
  );
}
